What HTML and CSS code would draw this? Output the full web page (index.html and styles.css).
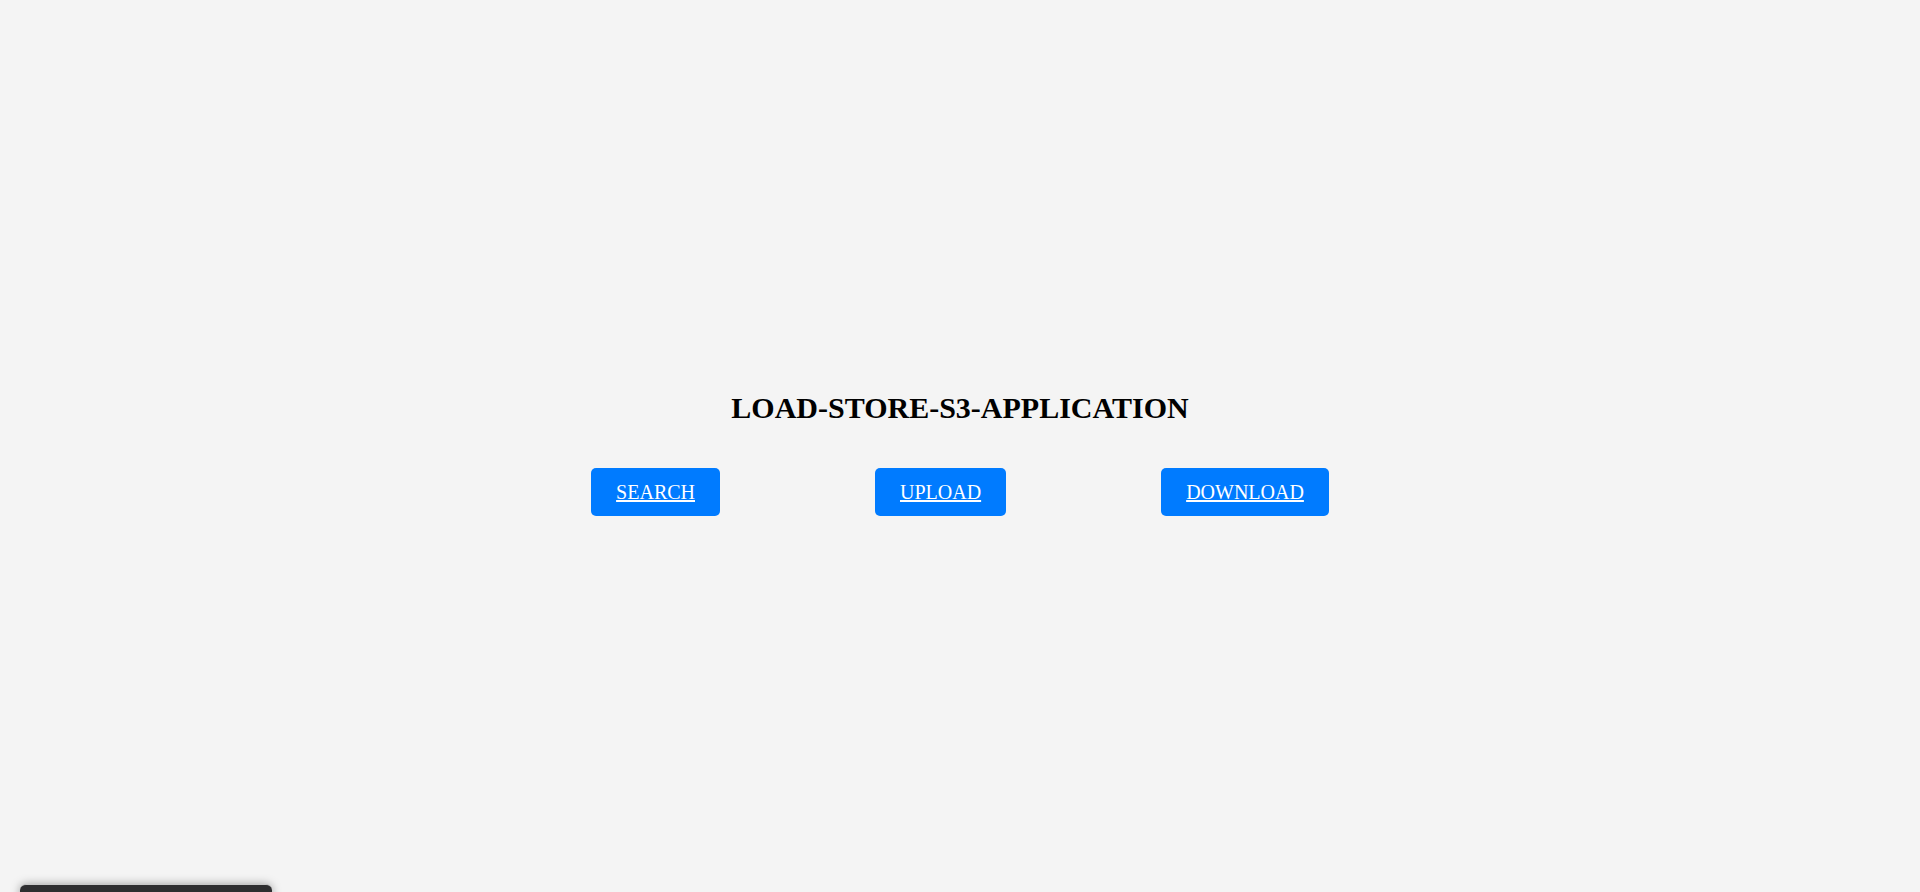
FILE: index.html
```html
<!DOCTYPE html>
<html lang="en">
<head>
<meta charset="utf-8">
<title>LOAD-STORE-S3-APPLICATION</title>
<link rel="stylesheet" href="styles.css">
</head>
<body>
<main class="page">
  <h1 class="title">LOAD-STORE-S3-APPLICATION</h1>
  <nav class="actions">
    <a class="btn" href="#search">SEARCH</a>
    <a class="btn" href="#upload">UPLOAD</a>
    <a class="btn" href="#download">DOWNLOAD</a>
  </nav>
</main>
<div class="dock"></div>
</body>
</html>
```
FILE: styles.css
```css
html, body {
  margin: 0;
  padding: 0;
}
body {
  background: #f4f4f4;
  font-family: "Liberation Serif", "Times New Roman", serif;
  color: #000;
  height: 892px;
  overflow: hidden;
}
.page {
  display: flex;
  flex-direction: column;
  align-items: center;
  padding-top: 389px;
}
.title {
  margin: 0;
  font-size: 30px;
  font-weight: bold;
  line-height: 37px;
}
.actions {
  display: flex;
  gap: 155px;
  margin-top: 42px;
}
.btn {
  display: block;
  background: #007bff;
  color: #fff;
  font-size: 20px;
  line-height: 23px;
  padding: 13px 25px 12px;
  border-radius: 5px;
  text-decoration: underline;
}
.dock {
  position: fixed;
  left: 20px;
  bottom: -40px;
  width: 252px;
  height: 47px;
  background: #2e2e30;
  border-top: 1px solid #c8c8c8;
  border-radius: 6px;
  box-shadow: 0 0 10px rgba(0, 0, 0, 0.35);
}
```
